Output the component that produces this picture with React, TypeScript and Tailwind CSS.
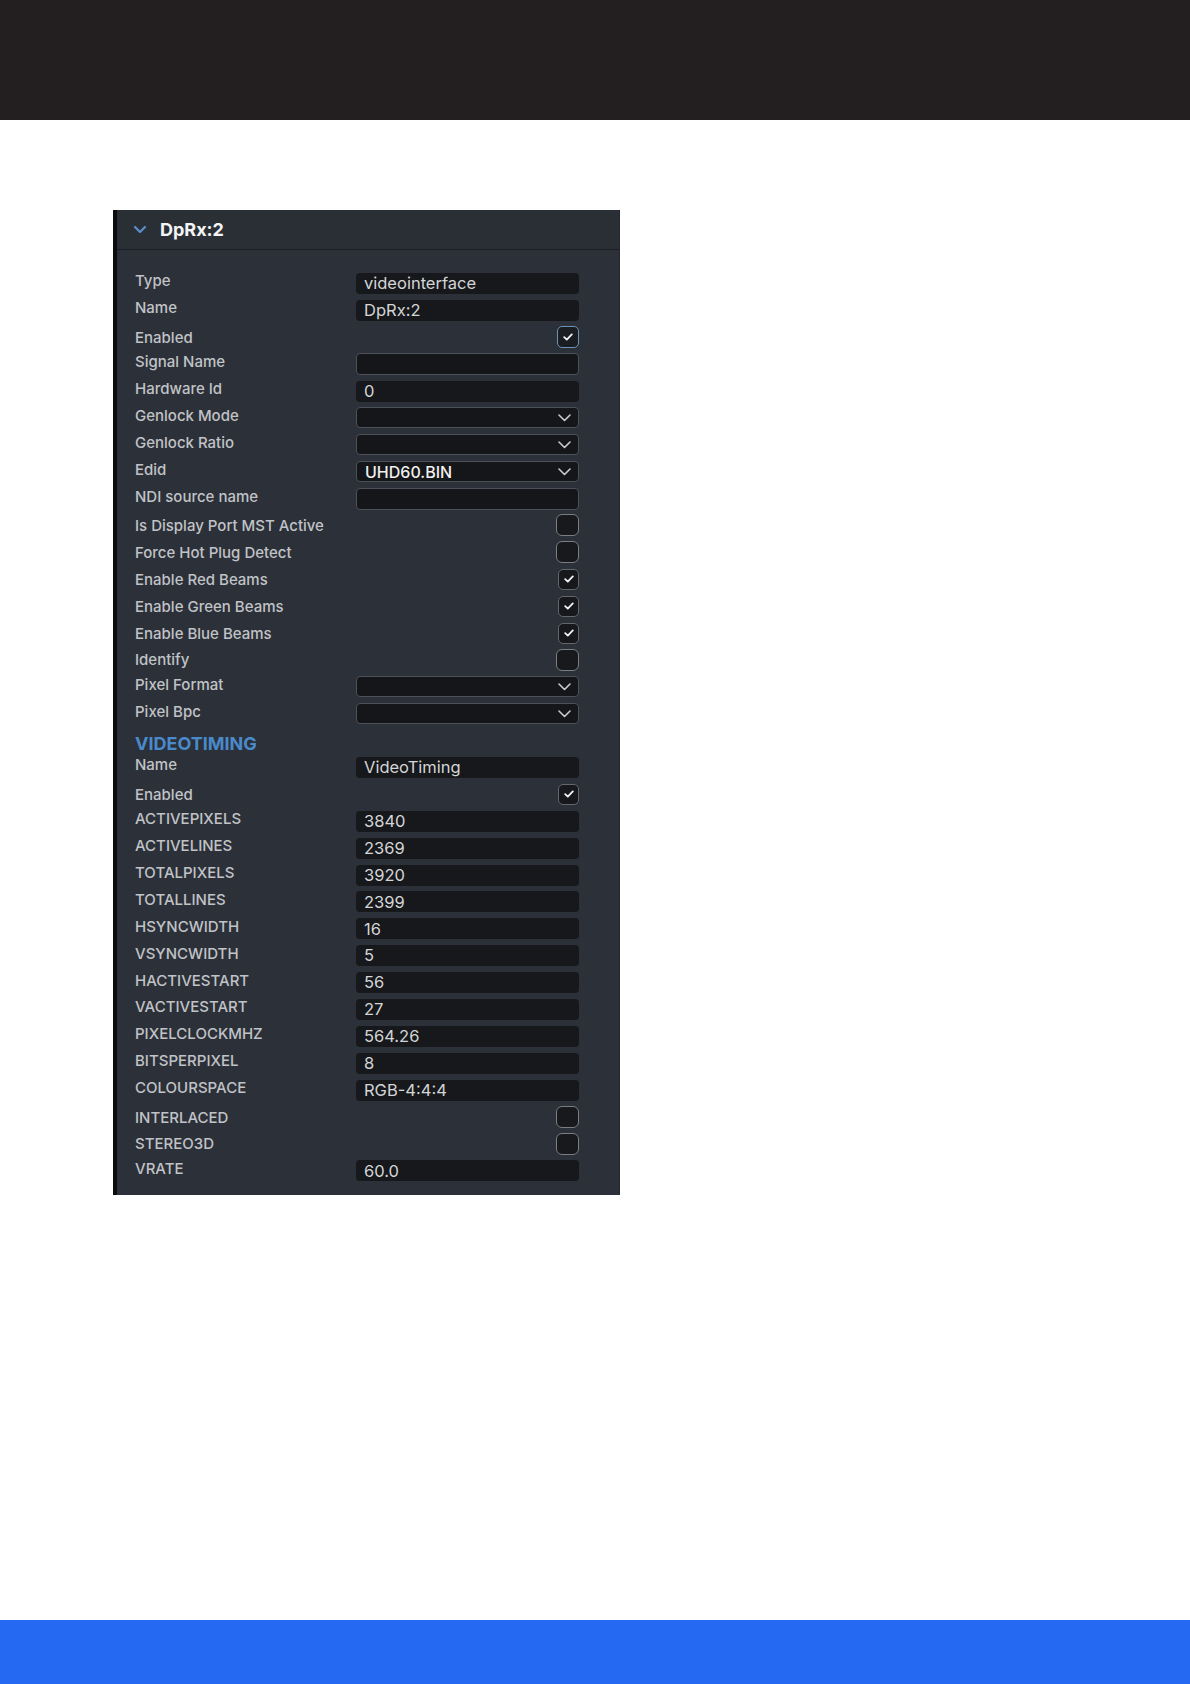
import React from "react";

type Row =
  | { kind: "text"; label: string; value?: string; bordered?: boolean }
  | { kind: "select"; label: string; value?: string }
  | { kind: "check"; label: string; checked: boolean; focus?: boolean }
  | { kind: "heading"; label: string };

const rows: Row[] = [
  { kind: "text", label: "Type", value: "videointerface" },
  { kind: "text", label: "Name", value: "DpRx:2" },
  { kind: "check", label: "Enabled", checked: true, focus: true },
  { kind: "text", label: "Signal Name", value: "", bordered: true },
  { kind: "text", label: "Hardware Id", value: "0" },
  { kind: "select", label: "Genlock Mode" },
  { kind: "select", label: "Genlock Ratio" },
  { kind: "select", label: "Edid", value: "UHD60.BIN" },
  { kind: "text", label: "NDI source name", value: "", bordered: true },
  { kind: "check", label: "Is Display Port MST Active", checked: false },
  { kind: "check", label: "Force Hot Plug Detect", checked: false },
  { kind: "check", label: "Enable Red Beams", checked: true },
  { kind: "check", label: "Enable Green Beams", checked: true },
  { kind: "check", label: "Enable Blue Beams", checked: true },
  { kind: "check", label: "Identify", checked: false },
  { kind: "select", label: "Pixel Format" },
  { kind: "select", label: "Pixel Bpc" },
  { kind: "heading", label: "VIDEOTIMING" },
  { kind: "text", label: "Name", value: "VideoTiming" },
  { kind: "check", label: "Enabled", checked: true },
  { kind: "text", label: "ACTIVEPIXELS", value: "3840" },
  { kind: "text", label: "ACTIVELINES", value: "2369" },
  { kind: "text", label: "TOTALPIXELS", value: "3920" },
  { kind: "text", label: "TOTALLINES", value: "2399" },
  { kind: "text", label: "HSYNCWIDTH", value: "16" },
  { kind: "text", label: "VSYNCWIDTH", value: "5" },
  { kind: "text", label: "HACTIVESTART", value: "56" },
  { kind: "text", label: "VACTIVESTART", value: "27" },
  { kind: "text", label: "PIXELCLOCKMHZ", value: "564.26" },
  { kind: "text", label: "BITSPERPIXEL", value: "8" },
  { kind: "text", label: "COLOURSPACE", value: "RGB-4:4:4" },
  { kind: "check", label: "INTERLACED", checked: false },
  { kind: "check", label: "STEREO3D", checked: false },
  { kind: "text", label: "VRATE", value: "60.0" },
];

function Chevron() {
  return (
    <svg width="13" height="8" viewBox="0 0 13 8" fill="none">
      <polyline points="1,1 6.5,6.5 12,1" stroke="#c9cbce" strokeWidth="1.6" strokeLinecap="round" strokeLinejoin="round" />
    </svg>
  );
}

function Check({ checked, focus }: { checked: boolean; focus?: boolean }) {
  return (
    <div
      className={
        checked
          ? focus
            ? "w-[22px] h-[22px] rounded-[5px] border-[1.5px] border-[#6f93b8] bg-[#1a1d21] flex items-center justify-center"
            : "w-[21px] h-[21px] rounded-[5px] border-[1.5px] border-[#63676d] bg-[#16181b] flex items-center justify-center"
          : "w-[23px] h-[22px] rounded-[6px] border-[1.5px] border-[#7a7d82] bg-[#17191c] flex items-center justify-center"
      }
    >
      {checked && (
        <svg width="10" height="8" viewBox="0 0 10 8" fill="none">
          <polyline points="1.2,4.2 3.8,6.6 8.8,1.4" stroke="#f2f2f2" strokeWidth="1.8" strokeLinecap="round" strokeLinejoin="round" />
        </svg>
      )}
    </div>
  );
}

function Field({ row }: { row: Row }) {
  if (row.kind === "check") {
    return (
      <div className="w-[223px] flex justify-end">
        <Check checked={row.checked} focus={row.focus} />
      </div>
    );
  }
  if (row.kind === "select") {
    return (
      <div className="w-[223px] h-[21px] rounded-[4px] border-[1.5px] border-[#4c5058] bg-[#141619] flex items-center justify-between pl-[8px] pr-[7px]">
        <span className="text-[16px] font-medium text-[#f0f0f0] leading-none">{row.value ?? ""}</span>
        <Chevron />
      </div>
    );
  }
  if (row.kind === "text") {
    return (
      <div
        className={
          row.bordered
            ? "w-[223px] h-[22px] rounded-[4px] border-[1.5px] border-[#4c5058] bg-[#141619] flex items-center pl-[8px]"
            : "w-[223px] h-[21px] rounded-[4px] bg-[#16181b] flex items-center pl-[8px]"
        }
      >
        <span className="text-[16.5px] text-[#d4d5d7] leading-none">{row.value}</span>
      </div>
    );
  }
  return null;
}

export default function App() {
  return (
    <div
      className="w-[1190px] h-[1684px] flex flex-col bg-white"
      style={{ fontFamily: "Inter, 'Liberation Sans', sans-serif" }}
    >
      <div className="h-[120px] bg-[#231f20] shrink-0" />
      <div className="flex-1 pt-[90px] pl-[113px]">
        <div className="w-[507px] h-[985px] border-l-4 border-[#0b0c0e] border-r border-r-[#24282e] bg-[#2c3038] flex flex-col">
          <div className="h-[40px] shrink-0 bg-[#2a2e35] border-b border-[#1a1d21] flex items-center pl-[16px]">
            <svg width="14" height="9" viewBox="0 0 14 9" fill="none">
              <polyline points="2,2 7,7 12,2" stroke="#5a8cc2" strokeWidth="2.4" strokeLinecap="round" strokeLinejoin="round" />
            </svg>
            <span className="ml-[13px] text-[18px] font-bold text-[#f3f4f5] leading-none">DpRx:2</span>
          </div>
          <div className="pt-[20px] pl-[18px] flex flex-col">
            {rows.map((row, i) =>
              row.kind === "heading" ? (
                <div key={i} className="h-[26.9px] flex items-end">
                  <span className="text-[18px] font-bold text-[#4a8acb] leading-none mb-[1px]">{row.label}</span>
                </div>
              ) : (
                <div key={i} className="h-[26.9px] flex items-center">
                  <span
                    className={
                      row.kind === "check"
                        ? "w-[221px] text-[15px] font-medium text-[#c0c3c7] leading-none"
                        : "w-[221px] text-[15px] font-medium text-[#c0c3c7] leading-none mb-[5px]"
                    }
                  >
                    {row.label}
                  </span>
                  <Field row={row} />
                </div>
              )
            )}
          </div>
        </div>
      </div>
      <div className="h-[64.5px] bg-[#2568f2] shrink-0" />
    </div>
  );
}
